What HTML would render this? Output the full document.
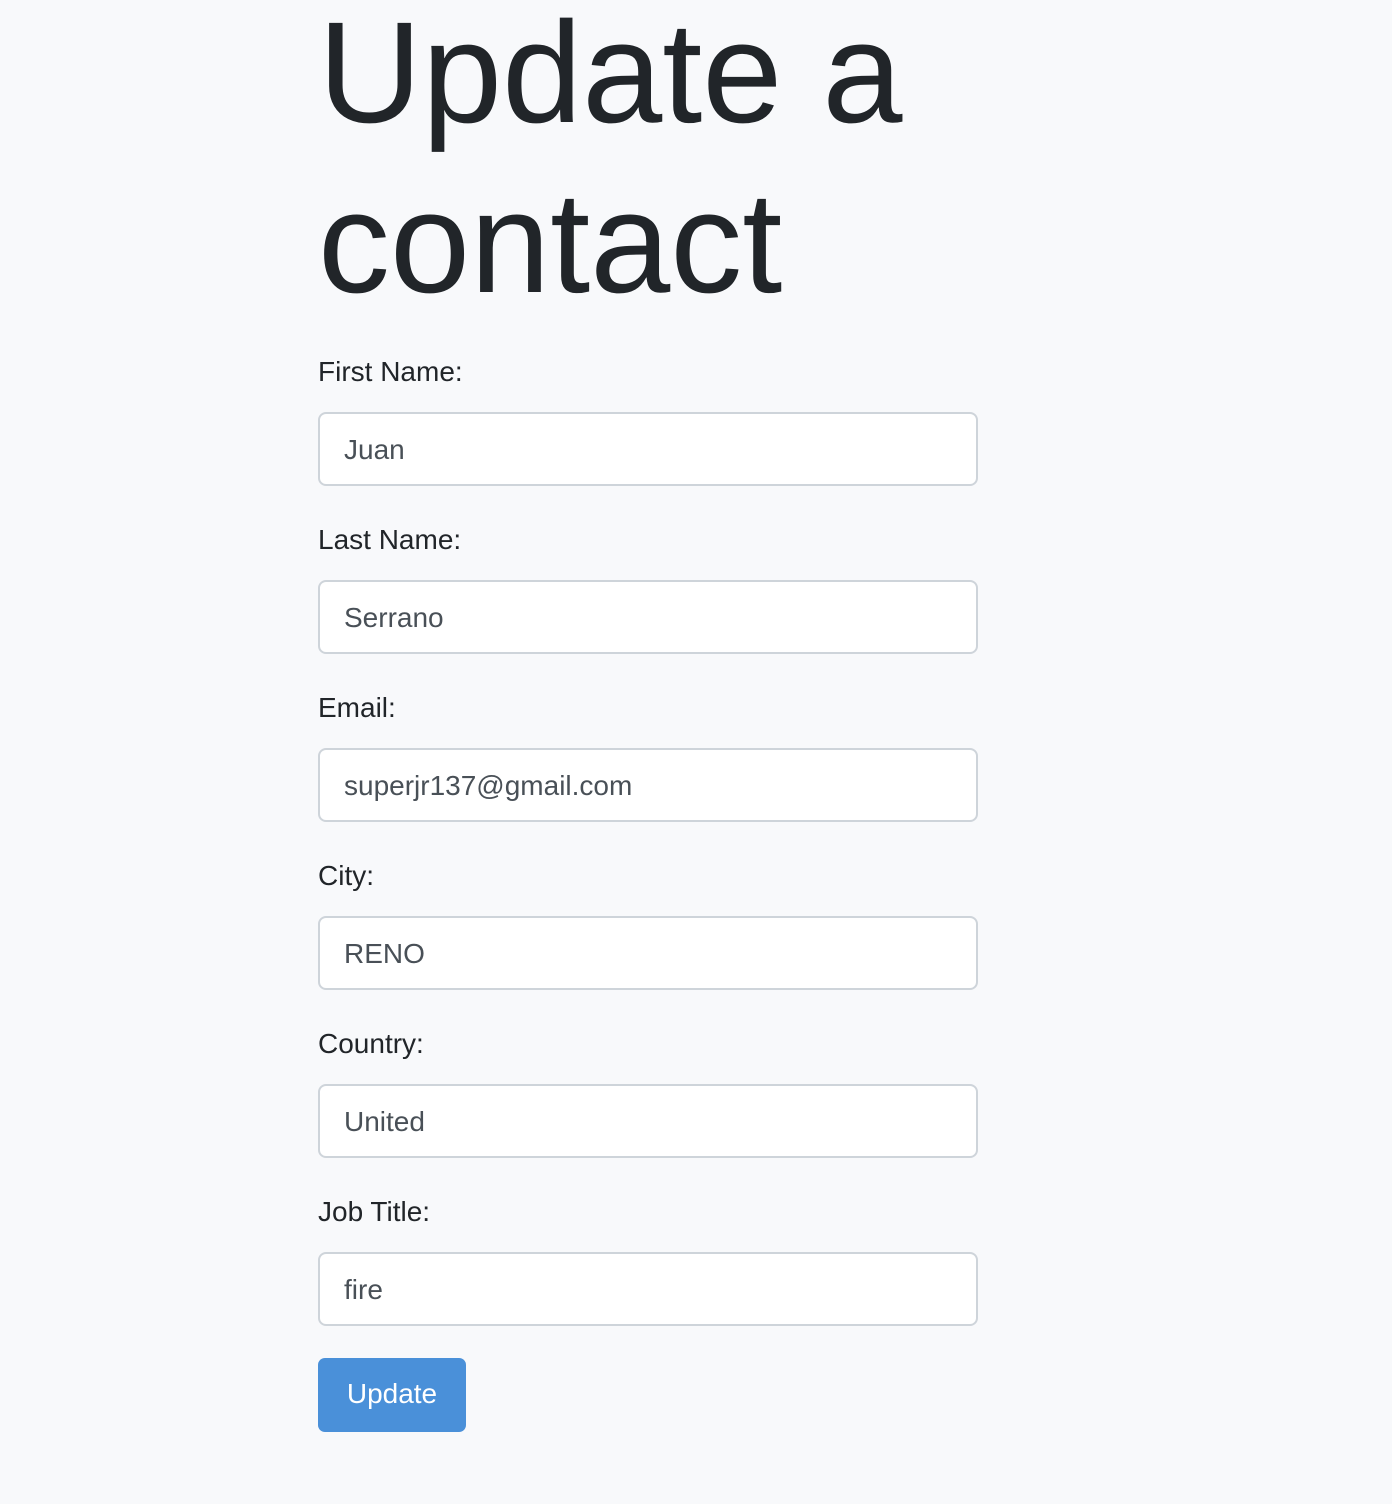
<!DOCTYPE html>
<html><head><meta charset="utf-8">
<style>
html,body{margin:0;padding:0;background:#f8f9fb;width:1392px;height:1504px;overflow:hidden;font-family:"Liberation Sans",sans-serif;color:#212529}
h1{position:absolute;left:318px;top:-12px;margin:0;font-weight:400;font-size:144px;line-height:170px;color:#212529;letter-spacing:0}
.l{position:absolute;left:318px;font-size:28px;line-height:40px;color:#212529}
.i{position:absolute;left:318px;height:70px;border:2px solid #ced4da;border-radius:8px;background:#fff;box-sizing:content-box;font-size:28px;line-height:72px;color:#495057;padding-left:24px;width:632px}
.b{position:absolute;left:318px;top:1358px;width:148px;height:74px;background:#4a90d9;border-radius:7px;color:#fff;font-size:28px;line-height:72px;text-align:center}
</style></head><body>
<h1>Update a<br>contact</h1>
<div class="l" style="top:352px">First Name:</div>
<div class="i" style="top:412px">Juan</div>
<div class="l" style="top:520px">Last Name:</div>
<div class="i" style="top:580px">Serrano</div>
<div class="l" style="top:688px">Email:</div>
<div class="i" style="top:748px">superjr137@gmail.com</div>
<div class="l" style="top:856px">City:</div>
<div class="i" style="top:916px">RENO</div>
<div class="l" style="top:1024px">Country:</div>
<div class="i" style="top:1084px">United</div>
<div class="l" style="top:1192px">Job Title:</div>
<div class="i" style="top:1252px">fire</div>
<div class="b">Update</div>
</body></html>
